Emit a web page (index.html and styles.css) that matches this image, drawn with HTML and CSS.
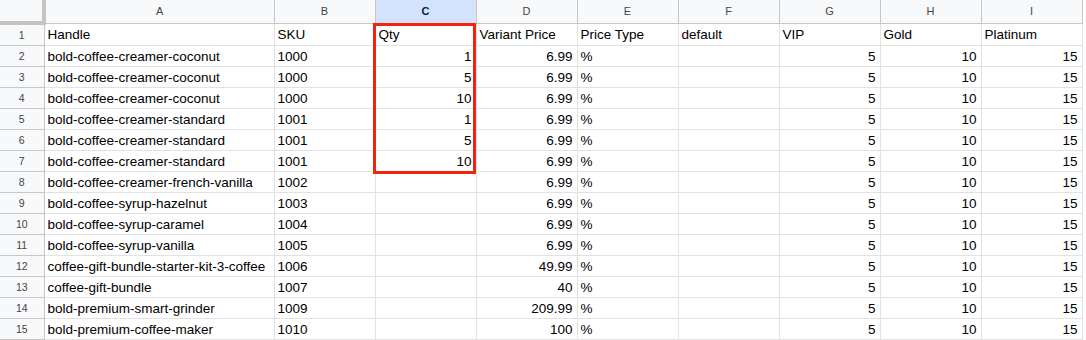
FILE: index.html
```html
<!DOCTYPE html>
<html>
<head>
<meta charset="utf-8">
<link rel="stylesheet" href="styles.css">
</head>
<body>
<div class="sheet">
<table class="grid">
<colgroup>
<col class="c-rh"><col class="c-a"><col class="c-n"><col class="c-n"><col class="c-n"><col class="c-n"><col class="c-n"><col class="c-n"><col class="c-n"><col class="c-n">
</colgroup>
<thead>
<tr class="colhdr">
<th class="corner"></th><th>A</th><th>B</th><th class="sel">C</th><th>D</th><th>E</th><th>F</th><th>G</th><th>H</th><th>I</th>
</tr>
</thead>
<tbody>
<tr><th>1</th><td>Handle</td><td>SKU</td><td>Qty</td><td>Variant Price</td><td>Price Type</td><td>default</td><td>VIP</td><td>Gold</td><td>Platinum</td></tr>
<tr><th>2</th><td>bold-coffee-creamer-coconut</td><td>1000</td><td class="r">1</td><td class="r">6.99</td><td>%</td><td></td><td class="r">5</td><td class="r">10</td><td class="r">15</td></tr>
<tr><th>3</th><td>bold-coffee-creamer-coconut</td><td>1000</td><td class="r">5</td><td class="r">6.99</td><td>%</td><td></td><td class="r">5</td><td class="r">10</td><td class="r">15</td></tr>
<tr><th>4</th><td>bold-coffee-creamer-coconut</td><td>1000</td><td class="r">10</td><td class="r">6.99</td><td>%</td><td></td><td class="r">5</td><td class="r">10</td><td class="r">15</td></tr>
<tr><th>5</th><td>bold-coffee-creamer-standard</td><td>1001</td><td class="r">1</td><td class="r">6.99</td><td>%</td><td></td><td class="r">5</td><td class="r">10</td><td class="r">15</td></tr>
<tr><th>6</th><td>bold-coffee-creamer-standard</td><td>1001</td><td class="r">5</td><td class="r">6.99</td><td>%</td><td></td><td class="r">5</td><td class="r">10</td><td class="r">15</td></tr>
<tr><th>7</th><td>bold-coffee-creamer-standard</td><td>1001</td><td class="r">10</td><td class="r">6.99</td><td>%</td><td></td><td class="r">5</td><td class="r">10</td><td class="r">15</td></tr>
<tr><th>8</th><td>bold-coffee-creamer-french-vanilla</td><td>1002</td><td></td><td class="r">6.99</td><td>%</td><td></td><td class="r">5</td><td class="r">10</td><td class="r">15</td></tr>
<tr><th>9</th><td>bold-coffee-syrup-hazelnut</td><td>1003</td><td></td><td class="r">6.99</td><td>%</td><td></td><td class="r">5</td><td class="r">10</td><td class="r">15</td></tr>
<tr><th>10</th><td>bold-coffee-syrup-caramel</td><td>1004</td><td></td><td class="r">6.99</td><td>%</td><td></td><td class="r">5</td><td class="r">10</td><td class="r">15</td></tr>
<tr><th>11</th><td>bold-coffee-syrup-vanilla</td><td>1005</td><td></td><td class="r">6.99</td><td>%</td><td></td><td class="r">5</td><td class="r">10</td><td class="r">15</td></tr>
<tr><th>12</th><td>coffee-gift-bundle-starter-kit-3-coffee</td><td>1006</td><td></td><td class="r">49.99</td><td>%</td><td></td><td class="r">5</td><td class="r">10</td><td class="r">15</td></tr>
<tr><th>13</th><td>coffee-gift-bundle</td><td>1007</td><td></td><td class="r">40</td><td>%</td><td></td><td class="r">5</td><td class="r">10</td><td class="r">15</td></tr>
<tr><th>14</th><td>bold-premium-smart-grinder</td><td>1009</td><td></td><td class="r">209.99</td><td>%</td><td></td><td class="r">5</td><td class="r">10</td><td class="r">15</td></tr>
<tr><th>15</th><td>bold-premium-coffee-maker</td><td>1010</td><td></td><td class="r">100</td><td>%</td><td></td><td class="r">5</td><td class="r">10</td><td class="r">15</td></tr>
</tbody>
</table>
<div class="selbox"></div>
</div>
</body>
</html>
```
FILE: styles.css
```css
html, body {
  margin: 0;
  padding: 0;
  background: #fff;
}
body {
  font-family: Arial, "Liberation Sans", sans-serif;
  font-size: 13.5px;
  color: #000;
}
.sheet {
  position: relative;
  width: 1086px;
  height: 340px;
  overflow: hidden;
}
.grid {
  border-collapse: collapse;
  table-layout: fixed;
  width: 1082px;
}
.c-rh { width: 44px; }
.c-a { width: 230px; }
.c-n { width: 101px; }

.grid td {
  height: 19px;
  padding: 1px 3px 0;
  border-right: 1px solid #e2e2e2;
  border-bottom: 1px solid #e2e2e2;
  white-space: nowrap;
  overflow: hidden;
  line-height: 19px;
  vertical-align: middle;
}
.grid td.r { text-align: right; padding-right: 4px; }

.grid tbody th {
  background: #f8f9fa;
  color: #444;
  font-weight: normal;
  font-size: 10.5px;
  border-right: 1px solid #c7c7c7;
  border-bottom: 1px solid #c7c7c7;
  text-align: center;
  padding: 1px 0 0;
  height: 19px;
  line-height: 19px;
}

.colhdr th {
  height: 21px;
  padding: 0;
  background: #f8f9fa;
  color: #444;
  font-weight: normal;
  font-size: 11px;
  border-right: 1px solid #c7c7c7;
  border-bottom: 1px solid #c7c7c7;
  text-align: center;
}
.colhdr th.sel {
  background: #d3e3fd;
  font-weight: bold;
  color: #041e49;
}
.colhdr th.corner {
  background: #f8f9fa;
  border-right: 4px solid #c4c4c4;
  border-bottom: 4px solid #c4c4c4;
}

.selbox {
  position: absolute;
  left: 373px;
  top: 23px;
  width: 97px;
  height: 145px;
  border: 3px solid #f2240f;
}
```
